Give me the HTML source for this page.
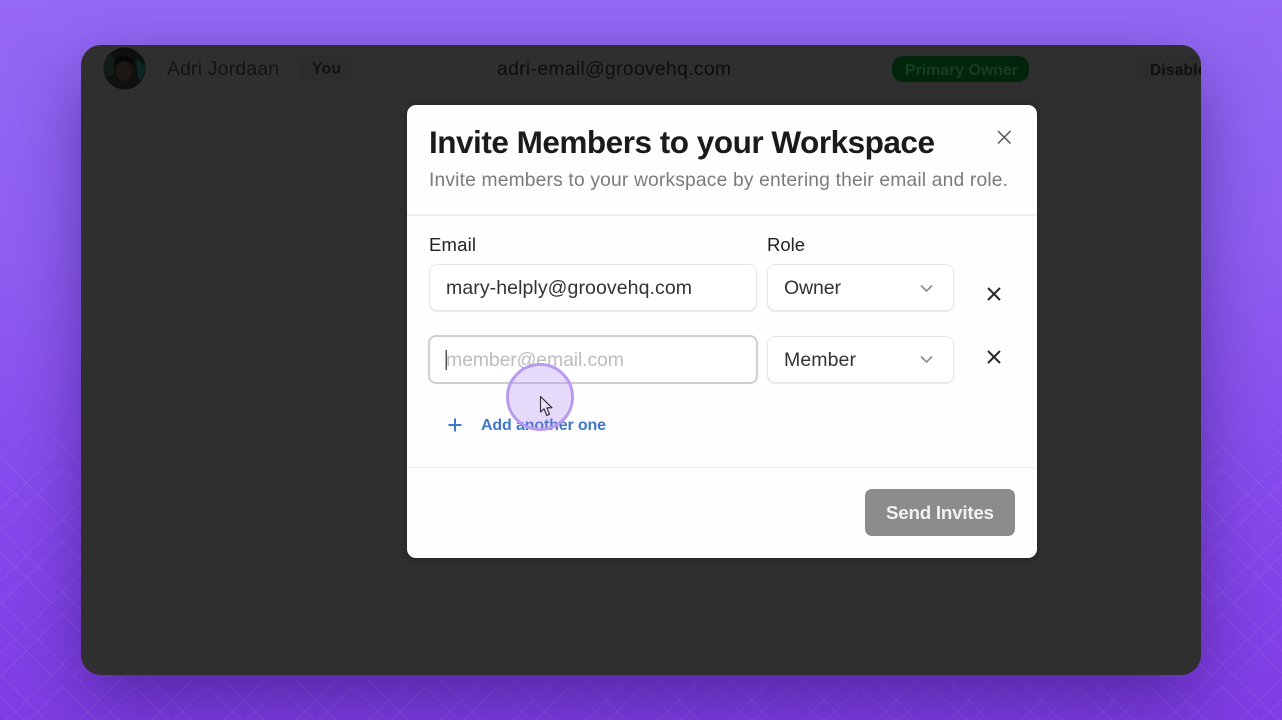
<!DOCTYPE html>
<html lang="en">
<head>
<meta charset="utf-8">
<title>Invite Members</title>
<style>
html,body{margin:0;padding:0;width:1282px;height:720px;overflow:hidden;background:#8a55ee}
body{position:relative}
div,svg{position:absolute;display:block}
text{font-family:"Liberation Sans",sans-serif}
#bg{left:0;top:0;width:1282px;height:720px;background:linear-gradient(180deg,#9469f4 0%,#8f5ff2 35%,#8649ec 70%,#7e3de4 100%)}
#card{left:81px;top:45px;width:1120px;height:630px;border-radius:20px;background:#2f2f2f;overflow:hidden;box-shadow:0 26px 70px -4px rgba(50,20,110,.6)}
.pill{border-radius:8px;background:#2d2d2d;border:1px solid #2b2b2b;box-sizing:border-box}
#modal{left:407px;top:105px;width:630px;height:453px;border-radius:9px;background:#fefefe;box-shadow:0 1px 6px rgba(0,0,0,.3)}
.field{box-sizing:border-box;background:#fff;border:1px solid #e6e6e6;border-radius:8px;box-shadow:0 1px 1px #e8e8e8}
.hr{left:407px;width:630px;height:1.5px;background:#efefef}
#btn{left:865px;top:489px;width:150px;height:47px;border-radius:7px;background:#8b8b8b}
#dot{left:506px;top:363px;width:68px;height:68px;box-sizing:border-box;border-radius:50%;border:3px solid #b99bf0;background:rgba(167,126,238,.28)}
</style>
</head>
<body>
<div id="bg"></div>
<svg width="1282" height="720" viewBox="0 0 1282 720" xmlns="http://www.w3.org/2000/svg" style="left:0;top:0">
<defs>
<pattern id="lat" patternUnits="userSpaceOnUse" width="72.5" height="72.5">
<g stroke="#fff" stroke-opacity=".07" stroke-width="1.1" fill="none">
<path d="M1.500 23l25-25 25 25-25 25z"/>
<path d="M1.500 95.500l25-25 25 25-25 25z"/>
<path d="M37.500 59l25-25 25 25-25 25z"/>
<path d="M-35 59l25-25 25 25-25 25z"/>
<path d="M37.500 -13.500l25-25 25 25-25 25z"/>
<path d="M-35 -13.500l25-25 25 25-25 25z"/>
<path d="M15.500 59l11-11 11 11-11 11z"/>
<path d="M51.500 23l11-11 11 11"/>
<path d="M-21 23l11-11 11 11"/>
<path d="M51.500 95.500l11-11 11 11"/>
<path d="M-21 95.500l11-11 11 11"/>
</g>
</pattern>
<linearGradient id="fade" x1="0" y1="0" x2="0" y2="1">
<stop offset="0" stop-color="#000"/>
<stop offset=".53" stop-color="#000"/>
<stop offset=".66" stop-color="#fff"/>
<stop offset="1" stop-color="#fff"/>
</linearGradient>
<mask id="m"><rect width="1282" height="720" fill="url(#fade)"/></mask>
</defs>
<rect width="1282" height="720" fill="url(#lat)" mask="url(#m)"/>
</svg>

<div id="card">
<div style="left:11px;top:56px;width:1100px;height:1px;background:#2b2b2b"></div>
<div class="pill" style="left:219px;top:11px;width:51px;height:25px"></div>
<div style="left:811px;top:11px;width:137px;height:26px;border-radius:11px;background:#02240b"></div>
<div class="pill" style="left:1057px;top:11px;width:90px;height:25px"></div>
<svg width="1282" height="720" viewBox="0 0 1282 720" xmlns="http://www.w3.org/2000/svg" style="left:-81px;top:-45px">
<circle cx="124.500" cy="68.500" r="21" fill="#0d100e"/>
<path d="M136 58a21 21 0 0 1 9 10a21 21 0 0 1-4 12l-3-1z" fill="#0b2624"/>
<path d="M104 68a21 21 0 0 1 7-15l3 8v14l-8 3z" fill="#121c16"/>
<path d="M115 60q9-9 18 0v4h-18z" fill="#070707"/>
<ellipse cx="124" cy="71" rx="8.500" ry="10" fill="#1d1714"/>
<text x="167" y="75" font-size="19.250" fill="#131313" textLength="112" lengthAdjust="spacing">Adri Jordaan</text>
<text x="312" y="73.500" font-size="15.500" font-weight="700" fill="#111" textLength="29" lengthAdjust="spacing">You</text>
<text x="497" y="75" font-size="19.250" fill="#0d0d0d" textLength="234" lengthAdjust="spacing">adri-email@groovehq.com</text>
<text x="905" y="75" font-size="16" font-weight="700" fill="#154020" textLength="113" lengthAdjust="spacing">Primary Owner</text>
<text x="1150" y="75" font-size="15.500" font-weight="700" fill="#0f0f0f" textLength="66" lengthAdjust="spacing">Disabled</text>
</svg>
</div>

<div id="modal"></div>
<div class="hr" style="top:214px"></div>
<div class="hr" style="top:466.500px"></div>
<div class="field" style="left:429px;top:264px;width:328px;height:47px"></div>
<div class="field" style="left:767px;top:264px;width:187px;height:47px"></div>
<div class="field" style="left:428px;top:334.500px;width:329.500px;height:49.500px;border:2px solid #cfcfcf;box-shadow:none"></div>
<div class="field" style="left:767px;top:336px;width:187px;height:47px"></div>
<div id="btn"></div>

<svg width="1282" height="720" viewBox="0 0 1282 720" xmlns="http://www.w3.org/2000/svg" style="left:0;top:0">
<text x="429" y="153" font-size="31.500" font-weight="700" fill="#1b1b1b" textLength="506" lengthAdjust="spacing">Invite Members to your Workspace</text>
<text x="429" y="186" font-size="19.250" fill="#7b7b7b" textLength="579" lengthAdjust="spacing">Invite members to your workspace by entering their email and role.</text>
<path d="M998 131L1010.500 143.500M1010.500 131L998 143.500" stroke="#555" stroke-width="1.500" fill="none"/>
<text x="429" y="251" font-size="18.500" fill="#222" textLength="47" lengthAdjust="spacing">Email</text>
<text x="767" y="251" font-size="18.500" fill="#222" textLength="38" lengthAdjust="spacing">Role</text>
<text x="446" y="294" font-size="19.500" fill="#333" textLength="246" lengthAdjust="spacing">mary-helply@groovehq.com</text>
<text x="784" y="294" font-size="19.500" fill="#333" textLength="57" lengthAdjust="spacing">Owner</text>
<path d="M921 285.500L926.500 291L932 285.500" stroke="#8a8a8a" stroke-width="1.600" fill="none"/>
<path d="M988 288L1000 300M1000 288L988 300" stroke="#2a2a2a" stroke-width="2" fill="none"/>
<text x="446" y="366" font-size="19.500" fill="#bdbdbd" textLength="178" lengthAdjust="spacing">member@email.com</text>
<rect x="445.500" y="350" width="1.500" height="20" fill="#555"/>
<text x="784" y="366" font-size="19.500" fill="#333" textLength="72" lengthAdjust="spacing">Member</text>
<path d="M921 356.500L926.500 362L932 356.500" stroke="#8a8a8a" stroke-width="1.600" fill="none"/>
<path d="M988 351L1000 363M1000 351L988 363" stroke="#2a2a2a" stroke-width="2" fill="none"/>
<path d="M455 418.500V431.500M448.500 425H461.500" stroke="#3f78c8" stroke-width="2" fill="none"/>
<text x="481" y="430" font-size="16" font-weight="700" fill="#3f78c8" textLength="125" lengthAdjust="spacing">Add another one</text>
<text x="886" y="519" font-size="18.800" font-weight="700" fill="#f2f2f2" textLength="108" lengthAdjust="spacing">Send Invites</text>
</svg>

<div id="dot"></div>
<svg width="1282" height="720" viewBox="0 0 1282 720" xmlns="http://www.w3.org/2000/svg" style="left:0;top:0">
<path d="M540.500 396.500V412L544 408.800L546.800 415.500L549.500 414.300L546.800 407.800H552Z" fill="#e8e0f8" stroke="#2b2b33" stroke-width="1.100" stroke-linejoin="round"/>
</svg>
</body>
</html>
